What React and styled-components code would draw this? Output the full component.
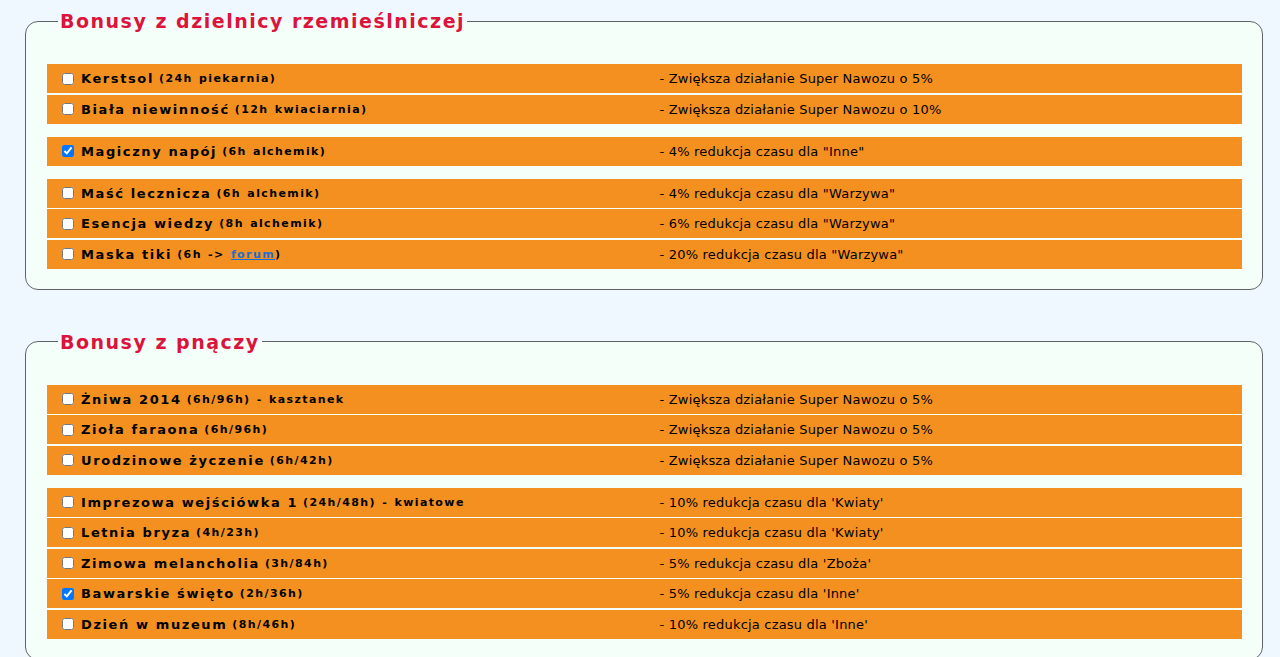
import styled, { createGlobalStyle } from "styled-components";

const GlobalStyle = createGlobalStyle`
  html, body {
    margin: 0;
    padding: 0;
    background: #f0f8ff;
    font-family: "DejaVu Sans", Verdana, sans-serif;
  }
`;

const sections = [
  {
    title: "Bonusy z dzielnicy rzemieślniczej",
    groups: [
      [
        { name: "Kerstsol", info: "(24h piekarnia)", effect: "- Zwiększa działanie Super Nawozu o 5%" },
        { name: "Biała niewinność", info: "(12h kwiaciarnia)", effect: "- Zwiększa działanie Super Nawozu o 10%" },
      ],
      [
        { name: "Magiczny napój", info: "(6h alchemik)", effect: '- 4% redukcja czasu dla "Inne"', checked: true },
      ],
      [
        { name: "Maść lecznicza", info: "(6h alchemik)", effect: '- 4% redukcja czasu dla "Warzywa"' },
        { name: "Esencja wiedzy", info: "(8h alchemik)", effect: '- 6% redukcja czasu dla "Warzywa"' },
        { name: "Maska tiki", info: "forum", effect: '- 20% redukcja czasu dla "Warzywa"', link: true },
      ],
    ],
  },
  {
    title: "Bonusy z pnączy",
    groups: [
      [
        { name: "Żniwa 2014", info: "(6h/96h)", extra: "- kasztanek", effect: "- Zwiększa działanie Super Nawozu o 5%" },
        { name: "Zioła faraona", info: "(6h/96h)", effect: "- Zwiększa działanie Super Nawozu o 5%" },
        { name: "Urodzinowe życzenie", info: "(6h/42h)", effect: "- Zwiększa działanie Super Nawozu o 5%" },
      ],
      [
        { name: "Imprezowa wejściówka 1", info: "(24h/48h)", extra: "- kwiatowe", effect: "- 10% redukcja czasu dla 'Kwiaty'" },
        { name: "Letnia bryza", info: "(4h/23h)", effect: "- 10% redukcja czasu dla 'Kwiaty'" },
        { name: "Zimowa melancholia", info: "(3h/84h)", effect: "- 5% redukcja czasu dla 'Zboża'" },
        { name: "Bawarskie święto", info: "(2h/36h)", effect: "- 5% redukcja czasu dla 'Inne'", checked: true },
        { name: "Dzień w muzeum", info: "(8h/46h)", effect: "- 10% redukcja czasu dla 'Inne'" },
      ],
    ],
  },
];

const Page = styled.div`
  padding: 10px 17px 0 25px;
`;

const Box = styled.fieldset`
  margin: 0 0 41px 0;
  padding: 32px 20px 20px 21px;
  border: 1px solid #5f6368;
  border-radius: 13px;
  background: #f5fffa;
`;

const Legend = styled.legend`
  margin-left: 11px;
  padding: 0 2px;
  color: #dc143c;
  font-size: 19px;
  font-weight: bold;
  letter-spacing: 1.5px;
`;

const Group = styled.div`
  display: flex;
  flex-direction: column;
  gap: 1.5px;
  & + & {
    margin-top: 13px;
  }
`;

const Row = styled.label`
  display: grid;
  grid-template-columns: 1fr 1fr;
  align-items: center;
  height: 29px;
  background: #f39020;
  color: #000;
`;

const Name = styled.div`
  display: flex;
  align-items: center;
  padding-left: 12px;
  font-size: 13px;
  font-weight: bold;
  letter-spacing: 1.6px;
  white-space: nowrap;

  input {
    margin: 0 7px 0 3px;
    width: 12px;
    height: 12px;
  }
`;

const Info = styled.span`
  margin-left: 5px;
  font-size: 11px;
  letter-spacing: 1.4px;
  word-spacing: 1px;
`;

const Link = styled.a`
  color: #1a6fd6;
  text-decoration: underline;
`;

const Effect = styled.div`
  padding-left: 15px;
  font-size: 13px;
  letter-spacing: 0.2px;
  white-space: nowrap;
`;

const BonusRow = ({ item }) => (
  <Row>
    <Name>
      <input type="checkbox" defaultChecked={!!item.checked} />
      {item.name}
      <Info>
        {item.link ? (
          <>
            (6h -&gt; <Link href="#">{item.info}</Link>)
          </>
        ) : (
          item.info
        )}
        {item.extra && <> {item.extra}</>}
      </Info>
    </Name>
    <Effect>{item.effect}</Effect>
  </Row>
);

export default function App() {
  return (
    <>
      <GlobalStyle />
      <Page>
        {sections.map((s) => (
          <Box key={s.title}>
            <Legend>{s.title}</Legend>
            {s.groups.map((g, i) => (
              <Group key={i}>
                {g.map((item) => (
                  <BonusRow key={item.name} item={item} />
                ))}
              </Group>
            ))}
          </Box>
        ))}
      </Page>
    </>
  );
}
